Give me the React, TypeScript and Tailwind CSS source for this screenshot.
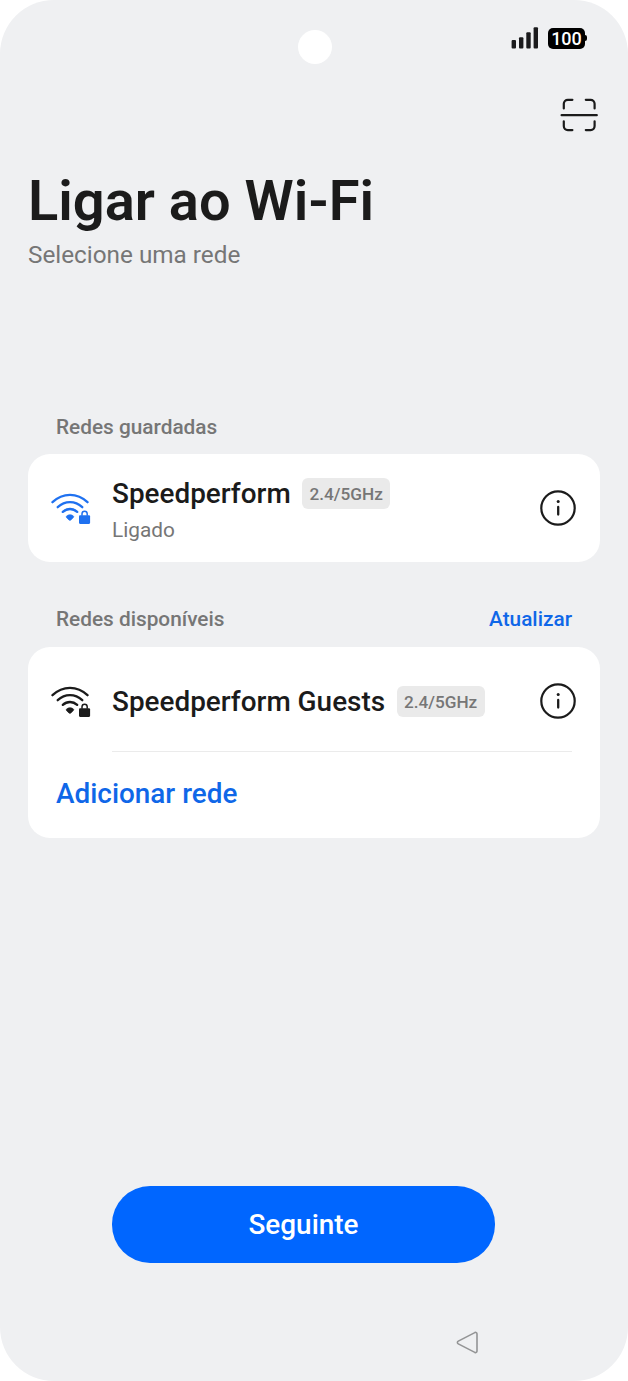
import React from 'react';

interface Network {
  name: string;
  band: string;
  status?: string;
}

const savedNetwork: Network = { name: 'Speedperform', band: '2.4/5GHz', status: 'Ligado' };
const availableNetwork: Network = { name: 'Speedperform Guests', band: '2.4/5GHz' };

const SignalIcon = () => (
  <svg width="28" height="22" viewBox="0 0 28 22" fill="#1b1b1d">
    <rect x="0.6" y="13" width="4.4" height="8.4" rx="1" />
    <rect x="8" y="10.3" width="4.4" height="11.1" rx="1" />
    <rect x="15.3" y="5.2" width="4.4" height="16.2" rx="1" />
    <rect x="22.6" y="0.2" width="4.4" height="21.2" rx="1" />
  </svg>
);

const ScanIcon = () => (
  <svg
    width="38"
    height="34"
    viewBox="0 0 38 34"
    fill="none"
    stroke="#1b1b1b"
    strokeWidth="2.2"
    strokeLinecap="round"
    strokeLinejoin="round"
  >
    <path d="M3.8 10.4V5.8a4 4 0 0 1 4-4h4.6M25.8 1.8h4.8a4 4 0 0 1 4 4v4.6M34.6 23.3v4.8a4 4 0 0 1-4 4h-4.8M12.4 32.1H7.8a4 4 0 0 1-4-4v-4.8" />
    <path d="M1.6 17.2h35.2" />
  </svg>
);

const WifiLockIcon = ({ className }: { className: string }) => (
  <svg width="40" height="32" viewBox="0 0 40 32" fill="none" className={className}>
    <g stroke="currentColor" strokeWidth="2.3" strokeLinecap="round">
      <path d="M1.5 10.2C11.8.4 26.2.4 36.5 10.2" />
      <path d="M6.7 15.2c7.3-6.8 17.3-6.8 24.6 0" />
      <path d="M11.8 19.9c4.2-3.9 10.2-3.9 14.4 0" />
    </g>
    <path
      d="M15.7 23.9c1.8-1.5 4.8-1.5 6.6 0 .5.5.5 1.2 0 1.7l-2.4 2.3c-.6.6-1.4.6-2 0L15.5 25.6c-.4-.5-.3-1.2.2-1.7Z"
      fill="currentColor"
      stroke="currentColor"
      strokeWidth="0.7"
    />
    <rect x="28" y="23.3" width="11.1" height="8.6" rx="1.1" fill="currentColor" />
    <path d="M31 23.7v-1.9a2.6 2.6 0 0 1 5.2 0v1.9" stroke="currentColor" strokeWidth="1.5" />
  </svg>
);

const InfoIcon = () => (
  <svg width="36" height="36" viewBox="0 0 36 36" fill="none">
    <circle cx="18" cy="18" r="16.7" stroke="#1b1b1b" strokeWidth="2.2" />
    <circle cx="18.2" cy="11.4" r="1.5" fill="#1b1b1b" />
    <path d="M18.2 16.9v7.6" stroke="#1b1b1b" strokeWidth="2.3" strokeLinecap="round" />
  </svg>
);

const BandBadge = ({ label }: { label: string }) => (
  <span className="flex h-[31px] w-[88px] shrink-0 items-center justify-center rounded-md bg-[#eaeaea] pt-0.5 text-[17.2px] font-medium text-[#767676]">
    {label}
  </span>
);

const NetworkInfo = ({ network }: { network: Network }) => (
  <div className="flex-1">
    <div className="flex items-center gap-[11.5px]">
      <span className="whitespace-nowrap text-[27.9px] leading-9 font-medium text-[#1b1b1b]">
        {network.name}
      </span>
      <BandBadge label={network.band} />
    </div>
    {network.status && (
      <p className="mt-1 text-[20.8px] leading-7 text-[#767676]">{network.status}</p>
    )}
  </div>
);

const App: React.FC = () => {
  return (
    <div className="h-[1381px] w-[628px] bg-white font-['Roboto',sans-serif]">
      <div className="flex h-full flex-col overflow-hidden rounded-[54px] bg-[#eff0f2] px-7">
        {/* Status bar */}
        <header className="grid h-[98px] shrink-0 grid-cols-[1fr_34px_1fr] items-start">
          <div />
          <div className="mt-[30px] ml-[0.5px] size-[34px] rounded-full bg-white" />
          <div className="mt-[27px] flex justify-end gap-[9px] pr-[13px]">
            <SignalIcon />
            <div className="flex items-center">
              <span className="flex h-[21px] w-[37px] items-center justify-center rounded-[5px] bg-black pt-px text-[18px] font-medium text-white">
                100
              </span>
              <span className="h-1.5 w-0.5 rounded-r-sm bg-black" />
            </div>
          </div>
        </header>

        <div className="mr-0.5 flex h-[34px] shrink-0 justify-end">
          <ScanIcon />
        </div>

        <h1 className="mt-[37px] text-[56px] leading-[64px] font-semibold text-[#1b1b1b]">
          Ligar ao Wi-Fi
        </h1>
        <p className="mt-1.5 text-[24.3px] leading-8 text-[#767676]">Selecione uma rede</p>

        {/* Saved networks */}
        <h2 className="mt-[142px] px-7 text-[20.8px] leading-7 font-medium text-[#767676]">
          Redes guardadas
        </h2>
        <section className="mt-[13px] flex h-[108px] shrink-0 items-center gap-[21px] rounded-[22px] bg-white pr-6 pl-[23px]">
          <WifiLockIcon className="text-[#1f71f0]" />
          <div className="flex-1 pt-[3px]">
            <NetworkInfo network={savedNetwork} />
          </div>
          <InfoIcon />
        </section>

        {/* Available networks */}
        <div className="mt-[43px] flex justify-between px-7 text-[20.8px] leading-7 font-medium">
          <h2 className="text-[#767676]">Redes disponíveis</h2>
          <button className="text-[#0f67e8]">Atualizar</button>
        </div>
        <section className="mt-[13.5px] h-[191.5px] shrink-0 rounded-[22px] bg-white">
          <div className="flex h-[104px] items-center gap-[21px] pt-1 pr-6 pl-[23px]">
            <WifiLockIcon className="text-[#1b1b1b]" />
            <div className="flex-1 pt-0.5">
              <NetworkInfo network={availableNetwork} />
            </div>
            <InfoIcon />
          </div>
          <div className="mr-7 ml-[84px] h-px bg-[#ebebeb]" />
          <button className="mt-6 ml-7 block text-[27.9px] leading-9 font-medium text-[#0f67e8]">
            Adicionar rede
          </button>
        </section>

        <button className="mt-auto ml-[84px] h-[77px] w-[383px] shrink-0 rounded-[38px] bg-[#0066ff] pt-0.5 text-[27.9px] font-medium text-white">
          Seguinte
        </button>

        {/* Navigation bar */}
        <nav className="flex h-[118.5px] shrink-0 justify-end pt-[68.5px] pr-[121px]">
          <svg width="23" height="23" viewBox="0 0 23 23" fill="none" stroke="#939495" strokeWidth="1.6">
            <path d="M2.3 10.1 18.8 1.6c1.1-.5 2.2.1 2.2 1.3v17.2c0 1.2-1.1 1.8-2.2 1.3L2.3 12.9c-1.2-.6-1.2-2.2 0-2.8Z" />
          </svg>
        </nav>
      </div>
    </div>
  );
};

export default App;
